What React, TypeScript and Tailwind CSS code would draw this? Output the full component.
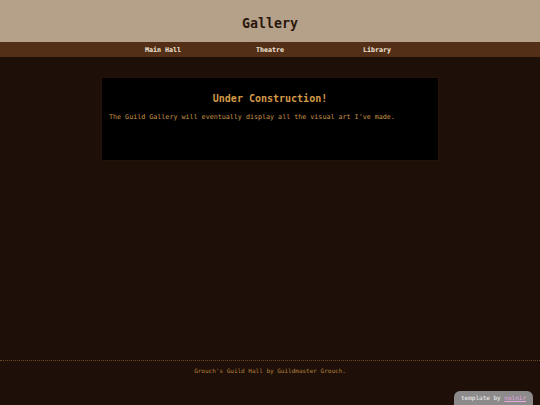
import React from "react";

const mono = { fontFamily: '"DejaVu Sans Mono", "Liberation Mono", monospace' };

export default function App() {
  const links = ["Main Hall", "Theatre", "Library"];

  return (
    <div className="relative flex h-[405px] flex-col overflow-hidden bg-[#1e0f08]" style={mono}>
      {/* Header */}
      <header className="flex h-[42px] items-center justify-center bg-[#b5a08a] pt-[5px]">
        <h1 className="text-[13.3px] font-bold leading-none text-[#2a170c]">Gallery</h1>
      </header>

      {/* Nav */}
      <nav className="flex h-[15px] items-center justify-center bg-[#532f17] pt-[1px]">
        <div className="grid w-[321px] grid-cols-3">
          {links.map((link) => (
            <a key={link} className="text-center text-[6.7px] font-bold leading-none text-[#f3e6d8]">
              {link}
            </a>
          ))}
        </div>
      </nav>

      {/* Main */}
      <main className="flex-1 pt-[20px]">
        <div className="mx-auto h-[84px] w-[338px] border border-[#251309] bg-black px-[7px] pt-[16px]">
          <h2 className="text-center text-[10px] font-bold leading-none text-[#d39a48]">
            Under Construction!
          </h2>
          <p className="mt-[10px] text-[6.7px] leading-none text-[#c99549]">
            The Guild Gallery will eventually display all the visual art I've made.
          </p>
        </div>
      </main>

      {/* Footer */}
      <footer className="h-[45px] border-t border-dotted border-[#6b4a22] pt-[7px]">
        <p className="text-center text-[6px] leading-none text-[#b3803e]">
          Grouch's Guild Hall by Guildmaster Grouch.
        </p>
      </footer>

      <div className="absolute bottom-0 right-[7px] flex h-[14px] w-[79px] items-center justify-center rounded-t-[6px] bg-[#8c8a8a] text-[6px] leading-none text-[#f2f2f2]">
        template by&nbsp;<span className="text-[#e9a6e0] underline">nolnir</span>
      </div>
    </div>
  );
}
